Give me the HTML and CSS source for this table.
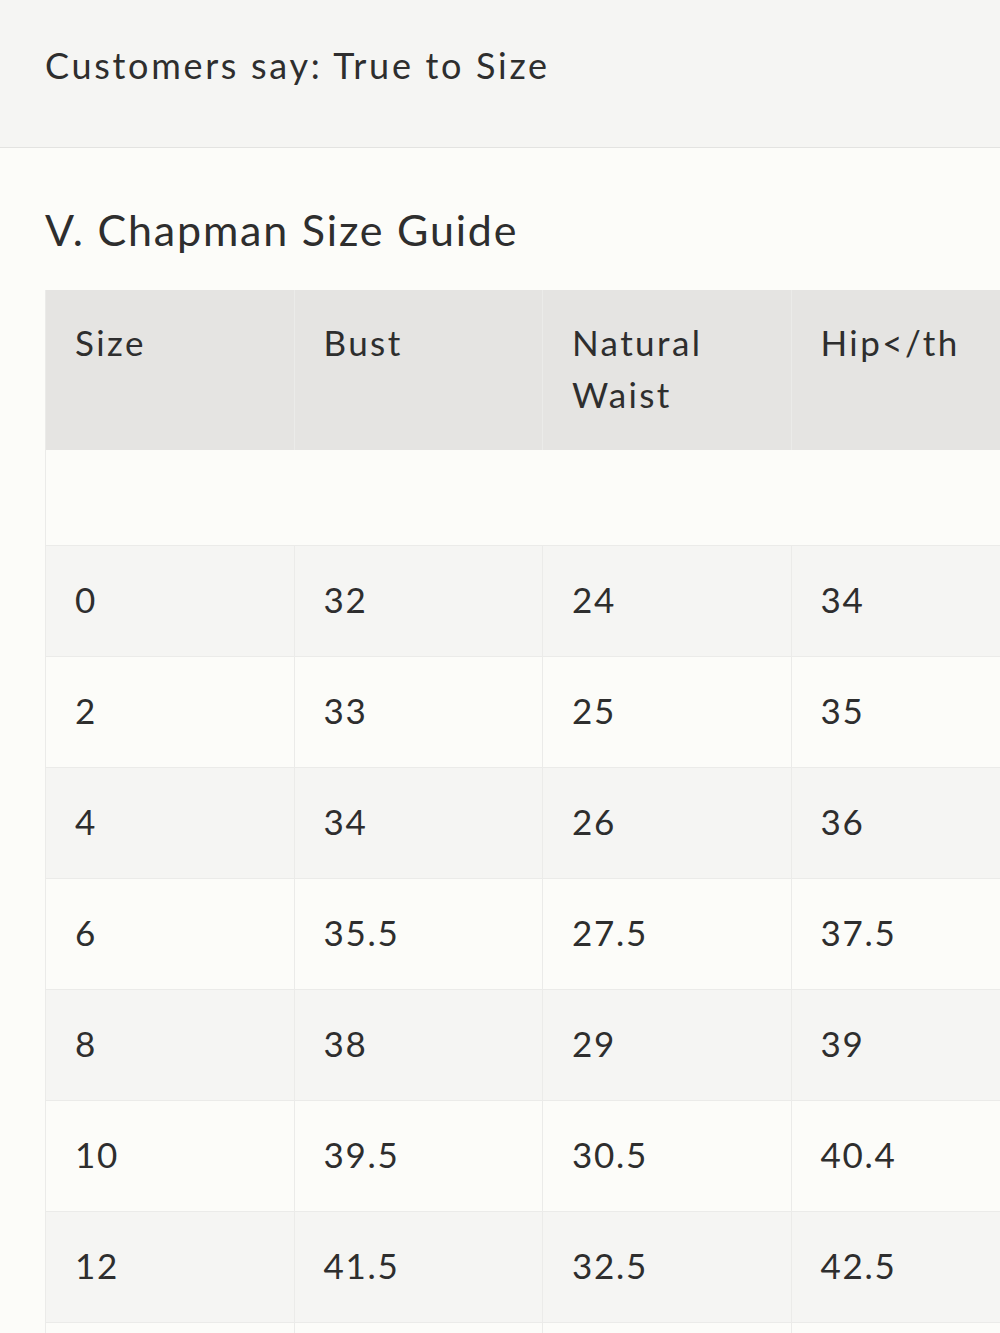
FILE: index.html
```html
<!DOCTYPE html>
<html>
<head>
<meta charset="utf-8">
<link rel="stylesheet" href="styles.css">
</head>
<body>
<div class="fit-bar">Customers say: True to Size</div>
<section class="guide">
  <h2 class="guide-title">V. Chapman Size Guide</h2>
  <div class="table-wrap">
    <table class="size-table">
      <thead>
        <tr><th>Size</th><th>Bust</th><th>Natural Waist</th><th>Hip&lt;/th</th></tr>
      </thead>
      <tbody>
        <tr class="spacer"><td></td><td></td><td></td><td></td></tr>
        <tr class="odd"><td>0</td><td>32</td><td>24</td><td>34</td></tr>
        <tr><td>2</td><td>33</td><td>25</td><td>35</td></tr>
        <tr class="odd"><td>4</td><td>34</td><td>26</td><td>36</td></tr>
        <tr><td>6</td><td>35.5</td><td>27.5</td><td>37.5</td></tr>
        <tr class="odd"><td>8</td><td>38</td><td>29</td><td>39</td></tr>
        <tr><td>10</td><td>39.5</td><td>30.5</td><td>40.4</td></tr>
        <tr class="odd"><td>12</td><td>41.5</td><td>32.5</td><td>42.5</td></tr>
        <tr class="tail"><td></td><td></td><td></td><td></td></tr>
      </tbody>
    </table>
  </div>
</section>
</body>
</html>
```
FILE: styles.css
```css
html, body {
  margin: 0;
  padding: 0;
  background: #fcfcf9;
  overflow: hidden;
}
body {
  font-family: Lato, "Noto Sans", sans-serif;
  color: #2e2e2e;
}
.fit-bar {
  box-sizing: border-box;
  height: 148px;
  background: #f5f5f3;
  border-bottom: 1px solid #e3e3e1;
  padding: 0 45px 18px;
  display: flex;
  align-items: center;
  font-size: 36px;
  letter-spacing: 2.7px;
}
.guide {
  padding: 0 0 0 45px;
}
.guide-title {
  margin: 0;
  padding-top: 56px;
  height: 86px;
  font-size: 43px;
  font-weight: 400;
  letter-spacing: 1.8px;
  line-height: 52px;
}
.table-wrap {
  width: 1100px;
}
.size-table {
  border-collapse: collapse;
  table-layout: fixed;
  width: 994px;
  font-size: 35px;
  letter-spacing: 1.7px;
}
.size-table th,
.size-table td {
  width: 248.5px;
  text-align: left;
  vertical-align: top;
  font-weight: 400;
  line-height: 52px;
  padding: 27px 28px 28px 29px;
  border-left: 1px solid #ebebe9;
  border-top: 1px solid #ebebe9;
  box-sizing: border-box;
}
.size-table thead th {
  background: #e5e4e2;
  padding: 26px 28px 28px 29px;
  height: 160px;
  border-top: none;
  letter-spacing: 2.4px;
}
.size-table tbody tr {
  height: 111px;
}
.size-table tbody tr.spacer {
  height: 95px;
}
.size-table tbody tr.spacer td {
  padding: 0;
  border-top: none;
  border-left: none;
}
.size-table tbody tr.spacer td:first-child {
  border-left: 1px solid #ebebe9;
}
.size-table tbody tr.odd td {
  background: #f5f5f3;
}
```
